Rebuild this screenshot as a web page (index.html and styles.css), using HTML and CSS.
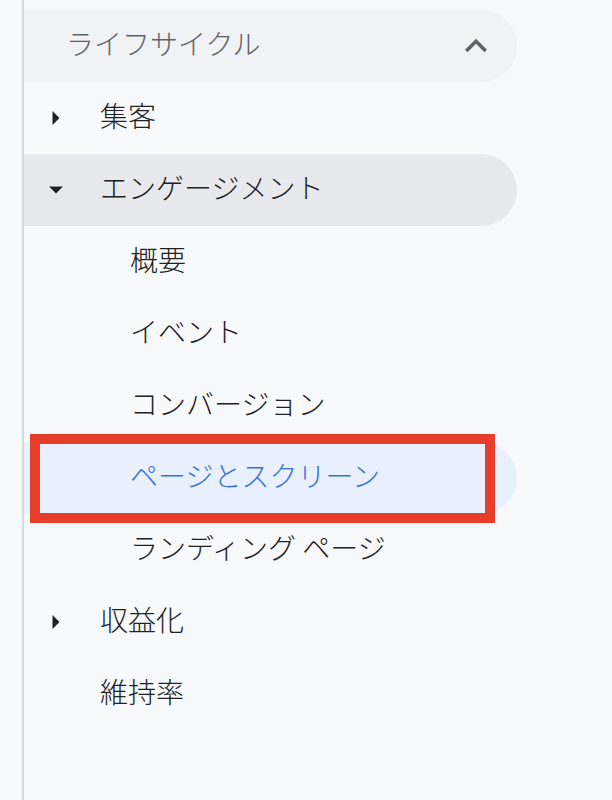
FILE: index.html
```html
<!DOCTYPE html>
<html lang="ja">

<head>
    <meta charset="UTF-8">
    <meta name="viewport" content="width=device-width, initial-scale=1.0">
    <title>ライフサイクル</title>
    <link rel="stylesheet" href="styles.css">
</head>

<body>
    <nav class="sidenav">
        <div class="nav-item nav-header">
            <span class="label">ライフサイクル</span>
            <svg class="chevron" width="44" height="44" viewBox="0 0 24 24">
                <path d="M7.4 15.4 12 10.8l4.6 4.6L18 14l-6-6-6 6z" fill="#5f6368"/>
            </svg>
        </div>

        <div class="nav-item">
            <span class="caret"><svg width="8" height="14" viewBox="0 0 8 14"><path d="M0.5 0 7.5 7 0.5 14z" fill="#202124"/></svg></span>
            <span class="label">集客</span>
        </div>

        <div class="nav-item nav-open">
            <span class="caret"><svg width="14" height="8" viewBox="0 0 14 8"><path d="M0 0.5h14L7 7.5z" fill="#202124"/></svg></span>
            <span class="label">エンゲージメント</span>
        </div>

        <div class="nav-item sub">概要</div>
        <div class="nav-item sub">イベント</div>
        <div class="nav-item sub">コンバージョン</div>
        <div class="nav-item sub active">
            ページとスクリーン
            <!-- annotation box drawn over the selected row -->
            <div class="highlight-box"></div>
        </div>
        <div class="nav-item sub">ランディング ページ</div>

        <div class="nav-item">
            <span class="caret"><svg width="8" height="14" viewBox="0 0 8 14"><path d="M0.5 0 7.5 7 0.5 14z" fill="#202124"/></svg></span>
            <span class="label">収益化</span>
        </div>

        <div class="nav-item">
            <span class="caret"></span>
            <span class="label">維持率</span>
        </div>
    </nav>
</body>

</html>
```

FILE: styles.css
```css
body {
    margin: 0;
    padding: 0;
    background-color: #f8f9fb;
    font-family: "Noto Sans CJK JP", "Noto Sans", sans-serif;
    color: #202124;
}

.sidenav {
    margin-left: 22px;
    border-left: 2px solid #d6d8db; /* light gray rule */
    min-height: 100vh;
    padding-top: 10px;
    box-sizing: border-box;
}

.nav-item {
    position: relative;
    display: flex;
    align-items: center;
    width: 493px;
    height: 72px;
    padding-bottom: 6px;
    font-size: 28px;
    font-weight: 300;
    line-height: 1;
    border-radius: 0 36px 36px 0;
    box-sizing: border-box;
}

.nav-header {
    justify-content: space-between;
    padding: 0 19px 6px 42px;
    background-color: #f1f2f4; /* light gray header pill */
    color: #5f6368;
}

.chevron {
    display: block;
    margin-top: 6px;
}

.caret {
    width: 76px;
    display: flex;
    justify-content: center;
    padding-top: 6px;
    box-sizing: border-box;
}

.caret svg {
    display: block;
    margin-right: 12px;
}

.nav-open {
    background-color: #e8e9ec; /* darker gray for the open section */
}

.sub {
    padding-left: 106px;
}

.active {
    background-color: #e8f0fe; /* pale blue selected row */
    color: #3870d8;
}

.highlight-box {
    position: absolute;
    left: 6px;
    top: -8px;
    width: 465px;
    height: 89px;
    border: 10px solid #e63e2b;
    box-sizing: border-box;
}
```
